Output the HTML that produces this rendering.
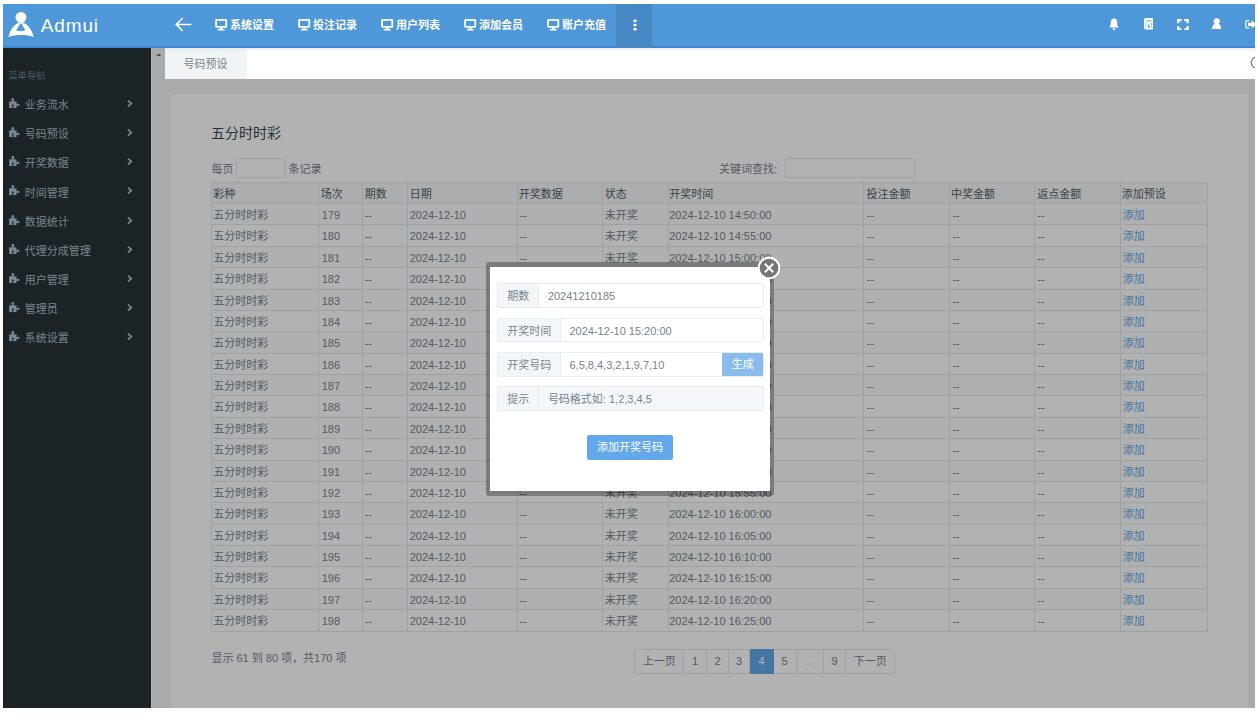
<!DOCTYPE html>
<html lang="zh-CN"><head><meta charset="utf-8"><title>Admui</title>
<style>
*{box-sizing:border-box;margin:0;padding:0}
html,body{width:1257px;height:716px;overflow:hidden;background:#fff}
body{font-family:"Liberation Sans","Noto Sans CJK SC",sans-serif;font-size:11px;color:#76838f;position:relative;line-height:1}
#app{position:absolute;left:3px;top:4px;width:1252px;height:704px;overflow:hidden;background:#f1f4f5}
.abs{position:absolute}
#hdr{position:absolute;left:0;top:0;width:1252px;height:44px;background:#4e97d9;color:#fff;box-shadow:inset 0 -1.500px 0 rgba(30,110,205,.45)}
#brand{position:absolute;left:37.800px;top:9.600px;font-size:19px;line-height:24px;color:#fff;letter-spacing:.85px}
.nav{position:absolute;top:0;height:44px;line-height:43px;font-size:11px;font-weight:bold;color:#fff;white-space:nowrap}
.nav svg{position:absolute;left:-14.8px;top:15.3px}
#more{position:absolute;left:613.200px;top:0;width:35.800px;height:44px;background:#4689c5}
#side{position:absolute;left:0;top:44px;width:148px;height:660px;background:#1c2327}
#side .cap{position:absolute;left:5.3px;top:22px;font-size:9.3px;line-height:12px;color:#4d5a62}
.mi{position:absolute;left:0;width:148px;height:29.17px;color:#7b868d;font-size:11px;line-height:29.17px}
.mi span{position:absolute;left:21.8px;top:0}
.mi svg.ic{position:absolute;left:5.500px;top:6.900px}
.mi svg.ch{position:absolute;left:123.8px;top:8.9px}
#strip{position:absolute;left:148px;top:44px;width:15px;height:660px;background:#aaa;border-left:1.500px solid #b5b5b5}
#tabs{position:absolute;left:161.500px;top:44px;width:1091px;height:31px;background:linear-gradient(#eee,#fff 4px,#fff);overflow:hidden}
#tab1{position:absolute;left:0;top:0;width:82px;height:31px;background:linear-gradient(#e6e9ea,#f1f4f5 4px,#f1f4f5);color:#76838f;font-size:11px;line-height:33px;text-align:center}
#page{position:absolute;left:161.6px;top:75px;width:1091px;height:629px;background:#f1f4f5}
#panel{position:absolute;left:6.4px;top:15px;width:1077px;height:620px;background:#fff}
#ovl{position:absolute;left:161.6px;top:75px;width:1091px;height:629px;background:rgba(0,0,0,.3)}
.t{position:absolute;white-space:nowrap}
#title{left:207.900px;top:120px;font-size:14px;line-height:18px;color:#37474f}
.box{position:absolute;border:1px solid #e4eaec;background:#fff;border-radius:2px}
#tbl{position:absolute;left:208px;top:178px;width:996px;height:449.6px;border-top:1px solid #e4e9eb;border-left:1px solid #e4e9eb;color:#76838f;background:#fff}
.r{display:flex;height:21.38px;line-height:23.38px;border-bottom:1px solid #e4e9eb;background:#fff}
.r:nth-child(even){background:#fbfdfd}
.r div{border-right:1px solid #e4e9eb;padding-left:2.2px;white-space:nowrap;overflow:hidden;flex:none}
.r a{color:#62a8ea;text-decoration:none}
.r.h{color:#526069;height:21px;line-height:23px;background:#f6f9fa}
#pg{position:absolute;left:631.4px;top:644.6px;height:25px;display:flex;font-size:11px;color:#76838f;line-height:23px}
#pg div{border:1px solid #e4eaec;border-left:none;background:#fff;text-align:center;flex:none;height:25px}
#pg div:first-child{border-left:1px solid #e4eaec;border-radius:2px 0 0 2px}
#pg div:last-child{border-radius:0 2px 2px 0}
#pg div.on{background:#62a8ea;border-color:#62a8ea;color:#fff}
#pg div.dis{color:#ccd5db}
#mwrap{position:absolute;left:483.05px;top:258.3px;width:288.15px;height:233.5px;background:rgba(0,0,0,.3);border-radius:3px}
#modal{position:absolute;left:487.3px;top:262.7px;width:279.7px;height:224.3px;background:#fff}
.fr{position:absolute;left:6.900px;width:266.800px;height:24.7px;border:1px solid #e8edef;border-radius:2px;background:#fff;font-size:11px;line-height:24.7px;color:#76838f;overflow:hidden}
.fr .l{position:absolute;left:0;top:0;height:100%;background:#f3f7f9;border-right:1px solid #e8edef;text-align:center;color:#76838f}
.fr .v{position:absolute;top:0;white-space:nowrap}
#gen{position:absolute;right:-1px;top:-1px;width:42.300px;height:24.7px;background:#89bceb;color:#fff;text-align:center;line-height:24.7px;font-size:11px}
#sub{position:absolute;left:96.700px;top:167.9px;width:86px;height:25.5px;background:#62a8ea;color:#fff;border-radius:2px;text-align:center;line-height:25.5px;font-size:11px}
#close{position:absolute;left:753.600px;top:252.200px;width:24px;height:24px}
</style></head><body>
<div id="app">
<div id="hdr">
<svg class="abs" style="left:5px;top:7px" width="27" height="28" viewBox="0 0 27 28"><g transform="translate(0,.6)"><circle cx="13" cy="5.760" r="5.450" fill="#fff"/><path d="M.3 25.400C1.600 20.500 4 15.600 7.600 13C9.400 11.600 11.400 10.500 13 10.500C14.600 10.500 16.600 11.600 18.400 13C22 15.600 24.400 20.500 25.750 25.400C21.500 23.900 17.500 23.450 13 23.450C8.500 23.450 4.500 23.900 .3 25.400zM13 11.300L8.100 18.300C9.500 19.800 16 19.800 17.200 18.300z" fill="#fff" fill-rule="evenodd"/></g></svg>
<div id="brand">Admui</div>
<svg class="abs" style="left:172.400px;top:13px" width="17" height="15" viewBox="0 0 17 15"><path d="M7.700 1L1.300 7.500 7.700 14M1.300 7.500H16.300" fill="none" stroke="#fff" stroke-width="1.700"/></svg>
<div class="nav" style="left:227.0px"><svg width="12.4" height="12" viewBox="0 0 12.4 12"><rect x="1.1" y="0.9" width="10.2" height="6.9" rx=".6" fill="none" stroke="#fff" stroke-width="1.8"/><path d="M4.8 8.5h2.8v1.6H4.800z M2.800 9.900h6.800v1.500H2.800z" fill="#fff"/></svg>系统设置</div>
<div class="nav" style="left:310.0px"><svg width="12.4" height="12" viewBox="0 0 12.4 12"><rect x="1.1" y="0.9" width="10.2" height="6.9" rx=".6" fill="none" stroke="#fff" stroke-width="1.8"/><path d="M4.8 8.5h2.8v1.6H4.800z M2.800 9.900h6.800v1.500H2.800z" fill="#fff"/></svg>投注记录</div>
<div class="nav" style="left:393.0px"><svg width="12.4" height="12" viewBox="0 0 12.4 12"><rect x="1.1" y="0.9" width="10.2" height="6.9" rx=".6" fill="none" stroke="#fff" stroke-width="1.8"/><path d="M4.8 8.5h2.8v1.6H4.800z M2.800 9.900h6.800v1.500H2.800z" fill="#fff"/></svg>用户列表</div>
<div class="nav" style="left:476.0px"><svg width="12.4" height="12" viewBox="0 0 12.4 12"><rect x="1.1" y="0.9" width="10.2" height="6.9" rx=".6" fill="none" stroke="#fff" stroke-width="1.8"/><path d="M4.8 8.5h2.8v1.6H4.800z M2.800 9.900h6.800v1.500H2.800z" fill="#fff"/></svg>添加会员</div>
<div class="nav" style="left:559.0px"><svg width="12.4" height="12" viewBox="0 0 12.4 12"><rect x="1.1" y="0.9" width="10.2" height="6.9" rx=".6" fill="none" stroke="#fff" stroke-width="1.8"/><path d="M4.8 8.5h2.8v1.6H4.800z M2.800 9.900h6.800v1.500H2.800z" fill="#fff"/></svg>账户充值</div>

<div id="more"><svg class="abs" style="left:16.5px;top:15px" width="4" height="13" viewBox="0 0 4 13"><ellipse cx="2" cy="1.900" rx="1.700" ry="1.400" fill="#fff"/><ellipse cx="2" cy="6.100" rx="1.700" ry="1.400" fill="#fff"/><ellipse cx="2" cy="10.200" rx="1.700" ry="1.400" fill="#fff"/></svg></div>
<!-- right icons -->
<svg class="abs" style="left:1105.800px;top:14.200px" width="10" height="12.800" viewBox="0 0 11 13" preserveAspectRatio="none"><path d="M5.5 0.3C3 0.6 1.9 2.6 1.9 5c0 2.6-.6 3.6-1.7 4.6h10.6C9.700 8.600 9.100 7.600 9.100 5 9.100 2.600 8 .6 5.500 .3zM3.900 10.300h3.200c0 1.100-.7 1.900-1.600 1.900s-1.600-.8-1.600-1.900z" fill="#fff"/></svg>
<svg class="abs" style="left:1140.600px;top:14.400px" width="9.600" height="11.600" viewBox="0 0 9.600 11.600"><rect x="0" y="0" width="9.600" height="11.600" rx="1.800" fill="#fff"/><g fill="#4e97d9"><rect x="2.300" y="2.100" width="5" height="1.300" opacity=".75"/><rect x="4.100" y="6.500" width="1.400" height="3.400"/><rect x="1.700" y="4.200" width=".7" height="5.700" opacity=".7"/><rect x="7.200" y="4.200" width=".7" height="5.700" opacity=".7"/></g></svg>
<svg class="abs" style="left:1173.800px;top:14.700px" width="11.800" height="11.300" viewBox="0 0 12 12" preserveAspectRatio="none"><path d="M1.150 4.600V1.150H4.600M7.400 1.150h3.450V4.600M10.850 7.400v3.450H7.400M4.600 10.850H1.150V7.400" fill="none" stroke="#fff" stroke-width="2.300"/></svg>
<svg class="abs" style="left:1209px;top:14px" width="9.400" height="11" viewBox="0 0 9.400 11"><circle cx="4.700" cy="3.250" r="3.100" fill="#fff"/><path d="M0 10.900C0 7.600 2 5.500 4.700 5.500S9.400 7.600 9.400 10.900z" fill="#fff"/></svg>
<svg class="abs" style="left:1241.800px;top:15.600px" width="12" height="9" viewBox="0 0 12 9"><path d="M4.200 .8H2a1.200 1.200 0 0 0-1.200 1.200v4.600a1.200 1.200 0 0 0 1.200 1.200H4.200" fill="none" stroke="#fff" stroke-width="1.400" opacity=".85"/><path d="M3 2.700h3.700V.3L11.800 4.300 6.700 8.300V5.900H3z" fill="#fff"/></svg>
</div>
<div id="side">
<div class="cap">菜单导航</div>
<div class="mi" style="top:43.07px"><svg class="ic" width="11" height="10.4" viewBox="0 0 11 10.4"><g fill="#7a8790"><circle cx="3.8" cy="1.5" r="1.4"/><rect x="3.1" y="2" width="1.4" height="2"/><rect x=".15" y="3.3" width="7.4" height="6.8"/><rect x="7.400" y="5.900" width="2" height="2"/><circle cx="9.400" cy="6.900" r="1.150"/></g><g fill="#1c2327"><circle cx="3.800" cy="7.500" r=".95"/><rect x="3.400" y="7.800" width=".8" height="2.400"/></g></svg><span>业务流水</span><svg class="ch" width="6" height="8" viewBox="0 0 6 8"><path d="M1 0.700L4.300 3.600 1 6.500" fill="none" stroke="#7b868d" stroke-width="1.700"/></svg></div>
<div class="mi" style="top:72.23px"><svg class="ic" width="11" height="10.4" viewBox="0 0 11 10.4"><g fill="#7a8790"><circle cx="3.8" cy="1.5" r="1.4"/><rect x="3.1" y="2" width="1.4" height="2"/><rect x=".15" y="3.3" width="7.4" height="6.8"/><rect x="7.400" y="5.900" width="2" height="2"/><circle cx="9.400" cy="6.900" r="1.150"/></g><g fill="#1c2327"><circle cx="3.800" cy="7.500" r=".95"/><rect x="3.400" y="7.800" width=".8" height="2.400"/></g></svg><span>号码预设</span><svg class="ch" width="6" height="8" viewBox="0 0 6 8"><path d="M1 0.700L4.300 3.600 1 6.500" fill="none" stroke="#7b868d" stroke-width="1.700"/></svg></div>
<div class="mi" style="top:101.41px"><svg class="ic" width="11" height="10.4" viewBox="0 0 11 10.4"><g fill="#7a8790"><circle cx="3.8" cy="1.5" r="1.4"/><rect x="3.1" y="2" width="1.4" height="2"/><rect x=".15" y="3.3" width="7.4" height="6.8"/><rect x="7.400" y="5.900" width="2" height="2"/><circle cx="9.400" cy="6.900" r="1.150"/></g><g fill="#1c2327"><circle cx="3.800" cy="7.500" r=".95"/><rect x="3.400" y="7.800" width=".8" height="2.400"/></g></svg><span>开奖数据</span><svg class="ch" width="6" height="8" viewBox="0 0 6 8"><path d="M1 0.700L4.300 3.600 1 6.500" fill="none" stroke="#7b868d" stroke-width="1.700"/></svg></div>
<div class="mi" style="top:130.58px"><svg class="ic" width="11" height="10.4" viewBox="0 0 11 10.4"><g fill="#7a8790"><circle cx="3.8" cy="1.5" r="1.4"/><rect x="3.1" y="2" width="1.4" height="2"/><rect x=".15" y="3.3" width="7.4" height="6.8"/><rect x="7.400" y="5.900" width="2" height="2"/><circle cx="9.400" cy="6.900" r="1.150"/></g><g fill="#1c2327"><circle cx="3.800" cy="7.500" r=".95"/><rect x="3.400" y="7.800" width=".8" height="2.400"/></g></svg><span>时间管理</span><svg class="ch" width="6" height="8" viewBox="0 0 6 8"><path d="M1 0.700L4.300 3.600 1 6.500" fill="none" stroke="#7b868d" stroke-width="1.700"/></svg></div>
<div class="mi" style="top:159.75px"><svg class="ic" width="11" height="10.4" viewBox="0 0 11 10.4"><g fill="#7a8790"><circle cx="3.8" cy="1.5" r="1.4"/><rect x="3.1" y="2" width="1.4" height="2"/><rect x=".15" y="3.3" width="7.4" height="6.8"/><rect x="7.400" y="5.900" width="2" height="2"/><circle cx="9.400" cy="6.900" r="1.150"/></g><g fill="#1c2327"><circle cx="3.800" cy="7.500" r=".95"/><rect x="3.400" y="7.800" width=".8" height="2.400"/></g></svg><span>数据统计</span><svg class="ch" width="6" height="8" viewBox="0 0 6 8"><path d="M1 0.700L4.300 3.600 1 6.500" fill="none" stroke="#7b868d" stroke-width="1.700"/></svg></div>
<div class="mi" style="top:188.92px"><svg class="ic" width="11" height="10.4" viewBox="0 0 11 10.4"><g fill="#7a8790"><circle cx="3.8" cy="1.5" r="1.4"/><rect x="3.1" y="2" width="1.4" height="2"/><rect x=".15" y="3.3" width="7.4" height="6.8"/><rect x="7.400" y="5.900" width="2" height="2"/><circle cx="9.400" cy="6.900" r="1.150"/></g><g fill="#1c2327"><circle cx="3.800" cy="7.500" r=".95"/><rect x="3.400" y="7.800" width=".8" height="2.400"/></g></svg><span>代理分成管理</span><svg class="ch" width="6" height="8" viewBox="0 0 6 8"><path d="M1 0.700L4.300 3.600 1 6.500" fill="none" stroke="#7b868d" stroke-width="1.700"/></svg></div>
<div class="mi" style="top:218.09px"><svg class="ic" width="11" height="10.4" viewBox="0 0 11 10.4"><g fill="#7a8790"><circle cx="3.8" cy="1.5" r="1.4"/><rect x="3.1" y="2" width="1.4" height="2"/><rect x=".15" y="3.3" width="7.4" height="6.8"/><rect x="7.400" y="5.900" width="2" height="2"/><circle cx="9.400" cy="6.900" r="1.150"/></g><g fill="#1c2327"><circle cx="3.800" cy="7.500" r=".95"/><rect x="3.400" y="7.800" width=".8" height="2.400"/></g></svg><span>用户管理</span><svg class="ch" width="6" height="8" viewBox="0 0 6 8"><path d="M1 0.700L4.300 3.600 1 6.500" fill="none" stroke="#7b868d" stroke-width="1.700"/></svg></div>
<div class="mi" style="top:247.26px"><svg class="ic" width="11" height="10.4" viewBox="0 0 11 10.4"><g fill="#7a8790"><circle cx="3.8" cy="1.5" r="1.4"/><rect x="3.1" y="2" width="1.4" height="2"/><rect x=".15" y="3.3" width="7.4" height="6.8"/><rect x="7.400" y="5.900" width="2" height="2"/><circle cx="9.400" cy="6.900" r="1.150"/></g><g fill="#1c2327"><circle cx="3.800" cy="7.500" r=".95"/><rect x="3.400" y="7.800" width=".8" height="2.400"/></g></svg><span>管理员</span><svg class="ch" width="6" height="8" viewBox="0 0 6 8"><path d="M1 0.700L4.300 3.600 1 6.500" fill="none" stroke="#7b868d" stroke-width="1.700"/></svg></div>
<div class="mi" style="top:276.43px"><svg class="ic" width="11" height="10.4" viewBox="0 0 11 10.4"><g fill="#7a8790"><circle cx="3.8" cy="1.5" r="1.4"/><rect x="3.1" y="2" width="1.4" height="2"/><rect x=".15" y="3.3" width="7.4" height="6.8"/><rect x="7.400" y="5.900" width="2" height="2"/><circle cx="9.400" cy="6.900" r="1.150"/></g><g fill="#1c2327"><circle cx="3.800" cy="7.500" r=".95"/><rect x="3.400" y="7.800" width=".8" height="2.400"/></g></svg><span>系统设置</span><svg class="ch" width="6" height="8" viewBox="0 0 6 8"><path d="M1 0.700L4.300 3.600 1 6.500" fill="none" stroke="#7b868d" stroke-width="1.700"/></svg></div>
</div>
<div id="strip"><svg class="abs" style="left:4.200px;top:4.900px" width="5.600" height="3.400" viewBox="0 0 5.600 3.400"><path d="M0 3.200L2.800 .3 5.600 3.200z" fill="#505050"/></svg></div>
<div id="tabs"><div id="tab1">号码预设</div>
<svg class="abs" style="left:1084px;top:8px" width="14" height="14" viewBox="0 0 14 14"><circle cx="7.600" cy="6.600" r="5.300" fill="none" stroke="#7a8088" stroke-width="1.300"/></svg>
</div>
<div id="page"><div id="panel"></div></div>
<div class="t" id="title">五分时时彩</div>
<div class="t" style="left:208.400px;top:158.500px;line-height:12px">每页</div>
<div class="box" style="left:233.400px;top:154.400px;width:48.300px;height:19.600px"></div>
<div class="t" style="left:285.600px;top:158.500px;line-height:12px">条记录</div>
<div class="t" style="left:716px;top:158.500px;line-height:12px">关键词查找:</div>
<div class="box" style="left:781.800px;top:154.300px;width:130.400px;height:19.700px"></div>
<div id="tbl">
<div class="r h"><div style="width:107.49px;padding-left:1.2px">彩种</div><div style="width:44.00px;padding-left:1.2px">场次</div><div style="width:45.00px;padding-left:1.2px">期数</div><div style="width:109.99px;padding-left:1.2px">日期</div><div style="width:84.99px;padding-left:0.3px">开奖数据</div><div style="width:65.49px;padding-left:1.2px">状态</div><div style="width:195.48px;padding-left:0.3px">开奖时间</div><div style="width:85.79px;padding-left:2.2px">投注金额</div><div style="width:84.99px;padding-left:0.8px">中奖金额</div><div style="width:86.29px;padding-left:2.2px">返点金额</div><div style="width:86.49px;padding-left:0.3px">添加预设</div></div>
<div class="r "><div style="width:107.49px;padding-left:1.2px">五分时时彩</div><div style="width:44.00px;padding-left:2.2px">179</div><div style="width:45.00px;padding-left:1.2px">--</div><div style="width:109.99px;padding-left:1.2px">2024-12-10</div><div style="width:84.99px;padding-left:1.2px">--</div><div style="width:65.49px;padding-left:1.2px">未开奖</div><div style="width:195.48px;padding-left:0.3px">2024-12-10 14:50:00</div><div style="width:85.79px;padding-left:2.2px">--</div><div style="width:84.99px;padding-left:2.2px">--</div><div style="width:86.29px;padding-left:2.2px">--</div><div style="width:86.49px;padding-left:1.2px"><a>添加</a></div></div>
<div class="r "><div style="width:107.49px;padding-left:1.2px">五分时时彩</div><div style="width:44.00px;padding-left:2.2px">180</div><div style="width:45.00px;padding-left:1.2px">--</div><div style="width:109.99px;padding-left:1.2px">2024-12-10</div><div style="width:84.99px;padding-left:1.2px">--</div><div style="width:65.49px;padding-left:1.2px">未开奖</div><div style="width:195.48px;padding-left:0.3px">2024-12-10 14:55:00</div><div style="width:85.79px;padding-left:2.2px">--</div><div style="width:84.99px;padding-left:2.2px">--</div><div style="width:86.29px;padding-left:2.2px">--</div><div style="width:86.49px;padding-left:1.2px"><a>添加</a></div></div>
<div class="r "><div style="width:107.49px;padding-left:1.2px">五分时时彩</div><div style="width:44.00px;padding-left:2.2px">181</div><div style="width:45.00px;padding-left:1.2px">--</div><div style="width:109.99px;padding-left:1.2px">2024-12-10</div><div style="width:84.99px;padding-left:1.2px">--</div><div style="width:65.49px;padding-left:1.2px">未开奖</div><div style="width:195.48px;padding-left:0.3px">2024-12-10 15:00:00</div><div style="width:85.79px;padding-left:2.2px">--</div><div style="width:84.99px;padding-left:2.2px">--</div><div style="width:86.29px;padding-left:2.2px">--</div><div style="width:86.49px;padding-left:1.2px"><a>添加</a></div></div>
<div class="r "><div style="width:107.49px;padding-left:1.2px">五分时时彩</div><div style="width:44.00px;padding-left:2.2px">182</div><div style="width:45.00px;padding-left:1.2px">--</div><div style="width:109.99px;padding-left:1.2px">2024-12-10</div><div style="width:84.99px;padding-left:1.2px">--</div><div style="width:65.49px;padding-left:1.2px">未开奖</div><div style="width:195.48px;padding-left:0.3px">2024-12-10 15:05:00</div><div style="width:85.79px;padding-left:2.2px">--</div><div style="width:84.99px;padding-left:2.2px">--</div><div style="width:86.29px;padding-left:2.2px">--</div><div style="width:86.49px;padding-left:1.2px"><a>添加</a></div></div>
<div class="r "><div style="width:107.49px;padding-left:1.2px">五分时时彩</div><div style="width:44.00px;padding-left:2.2px">183</div><div style="width:45.00px;padding-left:1.2px">--</div><div style="width:109.99px;padding-left:1.2px">2024-12-10</div><div style="width:84.99px;padding-left:1.2px">--</div><div style="width:65.49px;padding-left:1.2px">未开奖</div><div style="width:195.48px;padding-left:0.3px">2024-12-10 15:10:00</div><div style="width:85.79px;padding-left:2.2px">--</div><div style="width:84.99px;padding-left:2.2px">--</div><div style="width:86.29px;padding-left:2.2px">--</div><div style="width:86.49px;padding-left:1.2px"><a>添加</a></div></div>
<div class="r "><div style="width:107.49px;padding-left:1.2px">五分时时彩</div><div style="width:44.00px;padding-left:2.2px">184</div><div style="width:45.00px;padding-left:1.2px">--</div><div style="width:109.99px;padding-left:1.2px">2024-12-10</div><div style="width:84.99px;padding-left:1.2px">--</div><div style="width:65.49px;padding-left:1.2px">未开奖</div><div style="width:195.48px;padding-left:0.3px">2024-12-10 15:15:00</div><div style="width:85.79px;padding-left:2.2px">--</div><div style="width:84.99px;padding-left:2.2px">--</div><div style="width:86.29px;padding-left:2.2px">--</div><div style="width:86.49px;padding-left:1.2px"><a>添加</a></div></div>
<div class="r "><div style="width:107.49px;padding-left:1.2px">五分时时彩</div><div style="width:44.00px;padding-left:2.2px">185</div><div style="width:45.00px;padding-left:1.2px">--</div><div style="width:109.99px;padding-left:1.2px">2024-12-10</div><div style="width:84.99px;padding-left:1.2px">--</div><div style="width:65.49px;padding-left:1.2px">未开奖</div><div style="width:195.48px;padding-left:0.3px">2024-12-10 15:20:00</div><div style="width:85.79px;padding-left:2.2px">--</div><div style="width:84.99px;padding-left:2.2px">--</div><div style="width:86.29px;padding-left:2.2px">--</div><div style="width:86.49px;padding-left:1.2px"><a>添加</a></div></div>
<div class="r "><div style="width:107.49px;padding-left:1.2px">五分时时彩</div><div style="width:44.00px;padding-left:2.2px">186</div><div style="width:45.00px;padding-left:1.2px">--</div><div style="width:109.99px;padding-left:1.2px">2024-12-10</div><div style="width:84.99px;padding-left:1.2px">--</div><div style="width:65.49px;padding-left:1.2px">未开奖</div><div style="width:195.48px;padding-left:0.3px">2024-12-10 15:25:00</div><div style="width:85.79px;padding-left:2.2px">--</div><div style="width:84.99px;padding-left:2.2px">--</div><div style="width:86.29px;padding-left:2.2px">--</div><div style="width:86.49px;padding-left:1.2px"><a>添加</a></div></div>
<div class="r "><div style="width:107.49px;padding-left:1.2px">五分时时彩</div><div style="width:44.00px;padding-left:2.2px">187</div><div style="width:45.00px;padding-left:1.2px">--</div><div style="width:109.99px;padding-left:1.2px">2024-12-10</div><div style="width:84.99px;padding-left:1.2px">--</div><div style="width:65.49px;padding-left:1.2px">未开奖</div><div style="width:195.48px;padding-left:0.3px">2024-12-10 15:30:00</div><div style="width:85.79px;padding-left:2.2px">--</div><div style="width:84.99px;padding-left:2.2px">--</div><div style="width:86.29px;padding-left:2.2px">--</div><div style="width:86.49px;padding-left:1.2px"><a>添加</a></div></div>
<div class="r "><div style="width:107.49px;padding-left:1.2px">五分时时彩</div><div style="width:44.00px;padding-left:2.2px">188</div><div style="width:45.00px;padding-left:1.2px">--</div><div style="width:109.99px;padding-left:1.2px">2024-12-10</div><div style="width:84.99px;padding-left:1.2px">--</div><div style="width:65.49px;padding-left:1.2px">未开奖</div><div style="width:195.48px;padding-left:0.3px">2024-12-10 15:35:00</div><div style="width:85.79px;padding-left:2.2px">--</div><div style="width:84.99px;padding-left:2.2px">--</div><div style="width:86.29px;padding-left:2.2px">--</div><div style="width:86.49px;padding-left:1.2px"><a>添加</a></div></div>
<div class="r "><div style="width:107.49px;padding-left:1.2px">五分时时彩</div><div style="width:44.00px;padding-left:2.2px">189</div><div style="width:45.00px;padding-left:1.2px">--</div><div style="width:109.99px;padding-left:1.2px">2024-12-10</div><div style="width:84.99px;padding-left:1.2px">--</div><div style="width:65.49px;padding-left:1.2px">未开奖</div><div style="width:195.48px;padding-left:0.3px">2024-12-10 15:40:00</div><div style="width:85.79px;padding-left:2.2px">--</div><div style="width:84.99px;padding-left:2.2px">--</div><div style="width:86.29px;padding-left:2.2px">--</div><div style="width:86.49px;padding-left:1.2px"><a>添加</a></div></div>
<div class="r "><div style="width:107.49px;padding-left:1.2px">五分时时彩</div><div style="width:44.00px;padding-left:2.2px">190</div><div style="width:45.00px;padding-left:1.2px">--</div><div style="width:109.99px;padding-left:1.2px">2024-12-10</div><div style="width:84.99px;padding-left:1.2px">--</div><div style="width:65.49px;padding-left:1.2px">未开奖</div><div style="width:195.48px;padding-left:0.3px">2024-12-10 15:45:00</div><div style="width:85.79px;padding-left:2.2px">--</div><div style="width:84.99px;padding-left:2.2px">--</div><div style="width:86.29px;padding-left:2.2px">--</div><div style="width:86.49px;padding-left:1.2px"><a>添加</a></div></div>
<div class="r "><div style="width:107.49px;padding-left:1.2px">五分时时彩</div><div style="width:44.00px;padding-left:2.2px">191</div><div style="width:45.00px;padding-left:1.2px">--</div><div style="width:109.99px;padding-left:1.2px">2024-12-10</div><div style="width:84.99px;padding-left:1.2px">--</div><div style="width:65.49px;padding-left:1.2px">未开奖</div><div style="width:195.48px;padding-left:0.3px">2024-12-10 15:50:00</div><div style="width:85.79px;padding-left:2.2px">--</div><div style="width:84.99px;padding-left:2.2px">--</div><div style="width:86.29px;padding-left:2.2px">--</div><div style="width:86.49px;padding-left:1.2px"><a>添加</a></div></div>
<div class="r "><div style="width:107.49px;padding-left:1.2px">五分时时彩</div><div style="width:44.00px;padding-left:2.2px">192</div><div style="width:45.00px;padding-left:1.2px">--</div><div style="width:109.99px;padding-left:1.2px">2024-12-10</div><div style="width:84.99px;padding-left:1.2px">--</div><div style="width:65.49px;padding-left:1.2px">未开奖</div><div style="width:195.48px;padding-left:0.3px">2024-12-10 15:55:00</div><div style="width:85.79px;padding-left:2.2px">--</div><div style="width:84.99px;padding-left:2.2px">--</div><div style="width:86.29px;padding-left:2.2px">--</div><div style="width:86.49px;padding-left:1.2px"><a>添加</a></div></div>
<div class="r "><div style="width:107.49px;padding-left:1.2px">五分时时彩</div><div style="width:44.00px;padding-left:2.2px">193</div><div style="width:45.00px;padding-left:1.2px">--</div><div style="width:109.99px;padding-left:1.2px">2024-12-10</div><div style="width:84.99px;padding-left:1.2px">--</div><div style="width:65.49px;padding-left:1.2px">未开奖</div><div style="width:195.48px;padding-left:0.3px">2024-12-10 16:00:00</div><div style="width:85.79px;padding-left:2.2px">--</div><div style="width:84.99px;padding-left:2.2px">--</div><div style="width:86.29px;padding-left:2.2px">--</div><div style="width:86.49px;padding-left:1.2px"><a>添加</a></div></div>
<div class="r "><div style="width:107.49px;padding-left:1.2px">五分时时彩</div><div style="width:44.00px;padding-left:2.2px">194</div><div style="width:45.00px;padding-left:1.2px">--</div><div style="width:109.99px;padding-left:1.2px">2024-12-10</div><div style="width:84.99px;padding-left:1.2px">--</div><div style="width:65.49px;padding-left:1.2px">未开奖</div><div style="width:195.48px;padding-left:0.3px">2024-12-10 16:05:00</div><div style="width:85.79px;padding-left:2.2px">--</div><div style="width:84.99px;padding-left:2.2px">--</div><div style="width:86.29px;padding-left:2.2px">--</div><div style="width:86.49px;padding-left:1.2px"><a>添加</a></div></div>
<div class="r "><div style="width:107.49px;padding-left:1.2px">五分时时彩</div><div style="width:44.00px;padding-left:2.2px">195</div><div style="width:45.00px;padding-left:1.2px">--</div><div style="width:109.99px;padding-left:1.2px">2024-12-10</div><div style="width:84.99px;padding-left:1.2px">--</div><div style="width:65.49px;padding-left:1.2px">未开奖</div><div style="width:195.48px;padding-left:0.3px">2024-12-10 16:10:00</div><div style="width:85.79px;padding-left:2.2px">--</div><div style="width:84.99px;padding-left:2.2px">--</div><div style="width:86.29px;padding-left:2.2px">--</div><div style="width:86.49px;padding-left:1.2px"><a>添加</a></div></div>
<div class="r "><div style="width:107.49px;padding-left:1.2px">五分时时彩</div><div style="width:44.00px;padding-left:2.2px">196</div><div style="width:45.00px;padding-left:1.2px">--</div><div style="width:109.99px;padding-left:1.2px">2024-12-10</div><div style="width:84.99px;padding-left:1.2px">--</div><div style="width:65.49px;padding-left:1.2px">未开奖</div><div style="width:195.48px;padding-left:0.3px">2024-12-10 16:15:00</div><div style="width:85.79px;padding-left:2.2px">--</div><div style="width:84.99px;padding-left:2.2px">--</div><div style="width:86.29px;padding-left:2.2px">--</div><div style="width:86.49px;padding-left:1.2px"><a>添加</a></div></div>
<div class="r "><div style="width:107.49px;padding-left:1.2px">五分时时彩</div><div style="width:44.00px;padding-left:2.2px">197</div><div style="width:45.00px;padding-left:1.2px">--</div><div style="width:109.99px;padding-left:1.2px">2024-12-10</div><div style="width:84.99px;padding-left:1.2px">--</div><div style="width:65.49px;padding-left:1.2px">未开奖</div><div style="width:195.48px;padding-left:0.3px">2024-12-10 16:20:00</div><div style="width:85.79px;padding-left:2.2px">--</div><div style="width:84.99px;padding-left:2.2px">--</div><div style="width:86.29px;padding-left:2.2px">--</div><div style="width:86.49px;padding-left:1.2px"><a>添加</a></div></div>
<div class="r "><div style="width:107.49px;padding-left:1.2px">五分时时彩</div><div style="width:44.00px;padding-left:2.2px">198</div><div style="width:45.00px;padding-left:1.2px">--</div><div style="width:109.99px;padding-left:1.2px">2024-12-10</div><div style="width:84.99px;padding-left:1.2px">--</div><div style="width:65.49px;padding-left:1.2px">未开奖</div><div style="width:195.48px;padding-left:0.3px">2024-12-10 16:25:00</div><div style="width:85.79px;padding-left:2.2px">--</div><div style="width:84.99px;padding-left:2.2px">--</div><div style="width:86.29px;padding-left:2.2px">--</div><div style="width:86.49px;padding-left:1.2px"><a>添加</a></div></div>
</div>
<div class="t" style="left:208.400px;top:648px;line-height:12px">显示 61 到 80 项，共170 项</div>
<div id="pg"><div style="width:49.600px">上一页</div><div style="width:23px">1</div><div style="width:22px">2</div><div style="width:21.400px">3</div><div class="on" style="width:23.400px">4</div><div style="width:22.800px">5</div><div class="dis" style="width:27.200px">…</div><div style="width:22.400px">9</div><div style="width:49.200px">下一页</div></div>
<div id="ovl"></div>
<div id="mwrap"></div>
<div id="modal">
<div class="fr" style="top:16.300px;height:25px"><div class="l" style="width:41px">期数</div><div class="v" style="left:49.700px">20241210185</div></div>
<div class="fr" style="top:51px"><div class="l" style="width:63.200px">开奖时间</div><div class="v" style="left:71.300px">2024-12-10 15:20:00</div></div>
<div class="fr" style="top:85.800px"><div class="l" style="width:63.200px">开奖号码</div><div class="v" style="left:71.300px">6,5,8,4,3,2,1,9,7,10</div><div id="gen">生成</div></div>
<div class="fr" style="top:119.500px;background:#f3f7f9"><div class="l" style="width:41px">提示</div><div class="v" style="left:49.700px">号码格式如: 1,2,3,4,5</div></div>
<div id="sub">添加开奖号码</div>
</div>
<svg id="close" viewBox="0 0 24 24"><circle cx="12" cy="12" r="10.300" fill="#757575" stroke="#fff" stroke-width="2"/><path d="M7.800 7.800l8.400 8.400M16.200 7.800l-8.400 8.400" stroke="#fff" stroke-width="2" fill="none"/></svg>
</div>
</body></html>
